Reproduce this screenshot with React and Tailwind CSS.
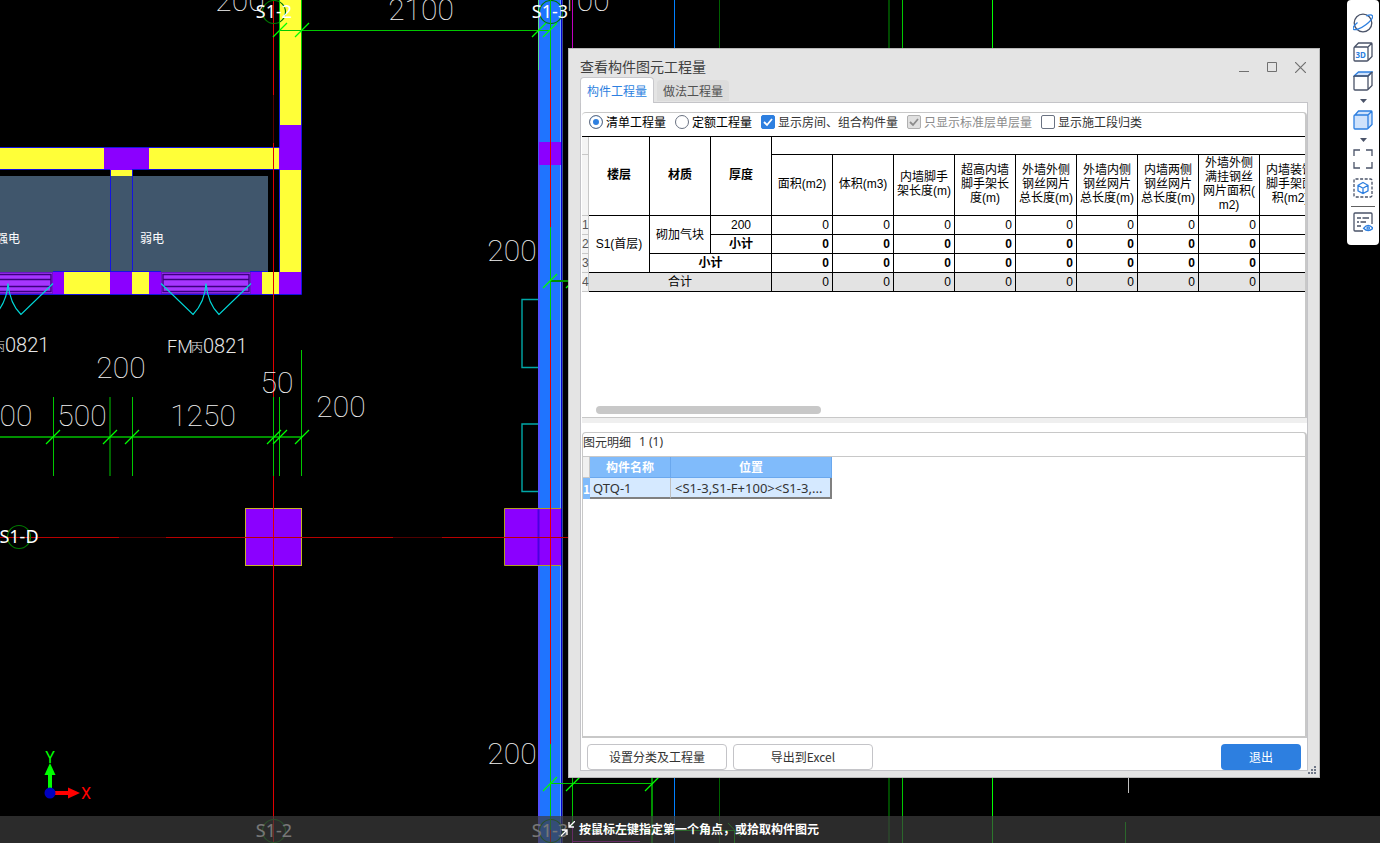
import React, { useState } from 'react'

// Quantity columns of the main table, one array entry per text line
const quantityColumns = [
  ['面积(m2)'],
  ['体积(m3)'],
  ['内墙脚手', '架长度(m)'],
  ['超高内墙', '脚手架长', '度(m)'],
  ['外墙外侧', '钢丝网片', '总长度(m)'],
  ['外墙内侧', '钢丝网片', '总长度(m)'],
  ['内墙两侧', '钢丝网片', '总长度(m)'],
  ['外墙外侧', '满挂钢丝', '网片面积(', 'm2)'],
  ['内墙装饰', '脚手架面', '积(m2)'],
]

// Dimension ticks, drawn as a short slash through each point
const ticks = [
  [280, 30], [302, 30], [539, 30], [550, 30],
  [53, 437], [110, 437], [132, 437], [274, 437], [280, 437], [302, 437],
  [550, 281], [573, 281], [550, 784], [573, 784], [652, 784],
]

const dimensions = [
  { x: 240, y: 11, text: '200' },
  { x: 421, y: 20, text: '2100' },
  { x: 585, y: 11, text: '100' },
  { x: 121, y: 378, text: '200' },
  { x: 16, y: 426, text: '00' },
  { x: 82, y: 426, text: '500' },
  { x: 203, y: 426, text: '1250' },
  { x: 277, y: 393, text: '50' },
  { x: 341, y: 417, text: '200' },
  { x: 512, y: 261, text: '200' },
  { x: 512, y: 764, text: '200' },
]

const Window = ({ x }) => (
  <g>
    <rect x={x} y="272" width="90" height="22" fill="#6a17c4" />
    <rect x={x + 1} y="273" width="88" height="20" fill="#a636ff" />
    <path d={`M${x + 2} 274.5h86v17h-86z`} fill="none" stroke="#3c0080" strokeWidth="1.4" />
    <path d={`M${x + 2} 279.5h86M${x + 2} 286.5h86`} stroke="#3c0080" strokeWidth="1.4" />
    <path
      d={`M${x} 283.5L${x + 32} 314.5Q${x + 44} 302 ${x + 45} 283.5Q${x + 47} 304 ${x + 58} 314.5L${x + 90} 283.5`}
      fill="none"
      stroke="#00d8d8"
      strokeWidth="1.2"
    />
  </g>
)

const Drawing = () => (
  <svg width="1380" height="843" viewBox="0 0 1380 843" className="absolute top-0 left-0 font-['Roboto','Noto_Sans_CJK_SC',sans-serif]">
    {/* Rooms */}
    <rect x="0" y="176" width="268" height="96" fill="#40566c" />

    {/* Walls */}
    <g fill="#ffff38">
      <rect x="279" y="0" width="23" height="272" />
      <rect x="0" y="148" width="280" height="22" />
      <rect x="110" y="170" width="22" height="6" />
      <rect x="64" y="272" width="216" height="22" />
    </g>

    {/* Columns */}
    <g fill="#8b00ff">
      <rect x="104" y="148" width="45" height="22" />
      <rect x="279" y="125" width="23" height="45" />
      <rect x="53" y="272" width="11" height="22" />
      <rect x="110" y="272" width="22" height="22" />
      <rect x="149" y="272" width="13" height="22" />
      <rect x="250" y="272" width="12" height="22" />
      <rect x="279" y="272" width="23" height="22" />
    </g>
    <g fill="none" stroke="#1414e0" strokeWidth="1">
      <path d="M0 147.5H279.5V70M301.5 70V294.5H0M0 169.5H110M132 169.5H279.5V272M110.5 170V272M132.5 170V272M53 271.5H161M250 271.5H268" />
    </g>
    <Window x={161} />
    <Window x={-37} />

    {/* Selected wall */}
    <rect x="538" y="0" width="23" height="843" fill="#1f74ff" />
    <path d="M539 0V843" stroke="#5050ff" strokeWidth="2" />
    <path d="M560.5 0V843" stroke="#6aa4ff" />
    <path d="M561.5 0V843" stroke="#0000d0" />
    <path d="M562.5 0V843" stroke="#3c4a90" />
    <rect x="539" y="142" width="22" height="23" fill="#8b00ff" />
    <path d="M561 508.5H504.5V565.5H561" fill="#8b00ff" stroke="#b0a020" />
    <path d="M538.5 509V565" stroke="#4a00e0" strokeWidth="2" />
    <rect x="245.5" y="508.5" width="56" height="57" fill="#8b00ff" stroke="#c8b428" />
    <path d="M538 299.5H522V367.500H538M538 424H522V491.500H538" fill="none" stroke="#00a8a8" strokeWidth="1.4" />

    {/* Axes */}
    <g stroke="#e00000">
      <path d="M273.5 0V95M273.5 118v2M273.5 143V843M550.5 70V843" />
      <path d="M273.5 95V143" stroke="#600000" />
      <path d="M0 537.5H119M142 537.5h2M166 537.5H393M416 537.5h2M442 537.5H568" stroke="#b80000" />
      <path d="M119 537.5H166M393 537.5H442" stroke="#500000" />
    </g>
    <g fill="none" stroke="#007a00" strokeWidth="1.2">
      <circle cx="274" cy="12" r="11.5" />
      <circle cx="551" cy="12" r="11.5" />
      <circle cx="19" cy="537" r="11.5" />
      <circle cx="274" cy="831" r="11.5" />
      <circle cx="551" cy="831" r="11.5" />
    </g>

    {/* Dimension lines */}
    <g fill="none" stroke="#00c800">
      <path d="M280 30.5H550M279.5 0V70M301.5 0V70M550.5 0V70M550.5 227V320M550.5 744V830" />
      <path d="M538.5 0V70" stroke="#50e090" />
      <path d="M0 437H302M550 281H568" stroke="#009000" strokeWidth="2" />
      <path d="M53.5 397V476M110 397V476M132.5 397V476M273.5 397V476M279.5 397V476M301.5 350V476" />
      <path d="M550 783.5H652M572.5 778V826M580 830.5H735" />
      <path d="M728 823L741 837M734.5 830V843" />
      <path d="M652 778V843" stroke="#009000" strokeWidth="2" />
      <path d="M719.5 0V843" stroke="#006000" />
      <path d="M889 0V843" stroke="#004800" strokeWidth="2" />
      <path d="M902.5 0V843" />
      <path d="M992.5 0V843" stroke="#00ff00" />
      <path d="M1125.5 822V843" />
    </g>
    <path d="M572.5 0V48M572.5 826V843M640 841.5H572" stroke="#c000c0" />
    <path d="M674.5 0V843" stroke="#0080ff" />
    <path d="M1128.5 778V793" stroke="#c0c0c0" />
    {ticks.map(([x, y]) => (
      <path key={`${x}-${y}`} d={`M${x - 7} ${y + 7}L${x + 7} ${y - 7}`} stroke="#00ff00" strokeWidth="1.2" />
    ))}

    {/* Labels */}
    <g fill="#f2f2f2" textAnchor="middle" className="text-[30px] font-thin">
      {dimensions.map(({ x, y, text }) => (
        <text key={`${x}-${y}`} x={x} y={y}>{text}</text>
      ))}
    </g>
    <g fill="#ffffff" textAnchor="middle" className="font-['Noto_Sans',sans-serif] text-[18px]">
      <text x="274" y="18">S1-2</text>
      <text x="550" y="18">S1-3</text>
      <text x="19" y="543">S1-D</text>
      <text x="274" y="837">S1-2</text>
      <text x="550" y="837">S1-3</text>
    </g>
    <g fill="#e6e6e6" className="text-[20px] font-light">
      <text x="167" y="353" className="text-[18px]">FM</text>
      <text x="191" y="352" className="text-[12px]">丙</text>
      <text x="203" y="353">0821</text>
      <text x="-7" y="351" className="text-[12px]">丙</text>
      <text x="5" y="352">0821</text>
    </g>
    <g fill="#ffffff" className="text-[12px]">
      <text x="-4" y="243">强电</text>
      <text x="140" y="243">弱电</text>
    </g>

    {/* Coordinate marker */}
    <g>
      <path d="M50 790V772" stroke="#00ff00" strokeWidth="4" />
      <path d="M44.5 775L50 763L55.500 775z" fill="#00ff00" />
      <path d="M53 793H70" stroke="#ff0000" strokeWidth="4" />
      <path d="M68 787.500L80 793L68 798.500z" fill="#ff0000" />
      <circle cx="50" cy="793" r="5.500" fill="#0000c0" />
      <text x="50" y="763" textAnchor="middle" fill="#00ff00" className="text-[16px]">Y</text>
      <text x="86" y="799" textAnchor="middle" fill="#ff0000" className="text-[16px]">X</text>
    </g>
  </svg>
)

const Check = () => (
  <svg viewBox="0 0 14 14" className="pointer-events-none col-start-1 row-start-1 h-[14px] w-[14px]">
    <path d="M3 7L6 10L11 4" fill="none" stroke="currentColor" strokeWidth="1.8" />
  </svg>
)

const Radio = ({ label, checked, onChange }) => (
  <label className="flex items-center gap-[3px] text-black">
    <input
      type="radio"
      name="quantity"
      checked={checked}
      onChange={onChange}
      className="h-[14px] w-[14px] appearance-none rounded-full border border-gray-500 bg-white checked:bg-[#2d7fe0] checked:shadow-[inset_0_0_0_3px_white]"
    />
    {label}
  </label>
)

const Checkbox = ({ label, defaultChecked, disabled }) => (
  <label className={disabled ? 'flex items-center gap-[3px] text-[#8c8c8c]' : 'flex items-center gap-[3px]'}>
    <span className={disabled ? 'grid text-[#8c8c8c]' : 'grid text-white'}>
      <input
        type="checkbox"
        defaultChecked={defaultChecked}
        disabled={disabled}
        className="col-start-1 row-start-1 h-[14px] w-[14px] appearance-none rounded-xs border border-gray-500 bg-white checked:border-[#2d7fe0] checked:bg-[#2d7fe0] disabled:border-[#b0b0b0] disabled:bg-[#e0e0e0]"
      />
      <Check />
    </span>
    {label}
  </label>
)

const cell = 'border-r border-b border-black'
const rowNumber = 'border-r border-b border-[#c8c8c8] bg-[#f4f4f4] font-normal text-[#555]'

const Zeros = ({ className }) =>
  quantityColumns.map((_, index) => (
    <td key={index} className={`border-r border-b border-black pr-[3px] pb-px text-right ${className}`}>
      {index < quantityColumns.length - 1 ? '0' : ''}
    </td>
  ))

const QuantityTable = () => (
  <table className="w-[739px] table-fixed border-separate border-spacing-0 border-t border-black text-center font-['Liberation_Sans','Noto_Sans_CJK_SC',sans-serif] text-xs leading-[14px] text-black">
    <colgroup>
      <col className="w-[7px]" />
      <col span={12} className="w-[61px]" />
    </colgroup>
    <thead>
      <tr className="h-[18px]">
        <th className={rowNumber}></th>
        <th rowSpan={2} className="border-r border-b border-black pb-[2px]">楼层</th>
        <th rowSpan={2} className="border-r border-b border-black pb-[2px]">材质</th>
        <th rowSpan={2} className="border-r border-b border-black pb-[2px]">厚度</th>
        <th colSpan={9} className={cell}></th>
      </tr>
      <tr className="h-[61px]">
        <th className={rowNumber}></th>
        {quantityColumns.map((lines, index) => (
          <th key={index} className="border-r border-b border-black pb-[2px] font-normal whitespace-nowrap">
            {lines.map((line) => (
              <div key={line}>{line}</div>
            ))}
          </th>
        ))}
      </tr>
    </thead>
    <tbody>
      <tr className="h-[19px]">
        <th className={rowNumber}>1</th>
        <td rowSpan={3} className={cell}>S1(首层)</td>
        <td rowSpan={2} className={cell}>砌加气块</td>
        <td className={cell}>200</td>
        <Zeros className="font-normal" />
      </tr>
      <tr className="h-[19px] font-bold">
        <th className={rowNumber}>2</th>
        <td className={cell}>小计</td>
        <Zeros className="font-bold" />
      </tr>
      <tr className="h-[19px] font-bold">
        <th className={rowNumber}>3</th>
        <td colSpan={2} className={cell}>小计</td>
        <Zeros className="font-bold" />
      </tr>
      <tr className="h-[19px] bg-[#e3e3e3]">
        <th className={rowNumber}>4</th>
        <td colSpan={3} className={cell}>合计</td>
        <Zeros className="font-normal" />
      </tr>
    </tbody>
  </table>
)

const DetailTable = () => (
  <table className="w-[249px] table-fixed border-separate border-spacing-0 text-left text-xs leading-4 text-[#333]">
    <colgroup>
      <col className="w-[7px]" />
      <col className="w-[81px]" />
      <col className="w-[161px]" />
    </colgroup>
    <thead>
      <tr className="h-[21px] text-center text-white">
        <th className="border-r border-b border-[#c8c8c8] bg-[#f0f0f0]"></th>
        <th className="border-r border-b border-[#6aa8ee] bg-[#80bbfb]">构件名称</th>
        <th className="border-r border-b border-[#6aa8ee] bg-[#80bbfb]">位置</th>
      </tr>
    </thead>
    <tbody>
      <tr className="h-[21px] bg-[#d5e9ff]">
        <th className="bg-[#80bbfb] text-center text-white">1</th>
        <td className="border-r border-b-2 border-r-[#c0c0c0] border-b-[#808080] pl-[3px] font-['Noto_Sans',sans-serif] text-[13px]">QTQ-1</td>
        <td className="border-r-2 border-b-2 border-[#808080] pl-1 font-['Noto_Sans',sans-serif] text-[13px] whitespace-nowrap">
          {'<S1-3,S1-F+100><S1-3,...'}
        </td>
      </tr>
    </tbody>
  </table>
)

const QuantityDialog = () => {
  const [mode, setMode] = useState('list')

  return (
    <section
      role="dialog"
      aria-label="查看构件图元工程量"
      className="absolute top-12 right-[60px] bottom-[65px] left-[568px] flex flex-col border border-[#b8b8b8] bg-[#e4e4e4] px-[11px] pb-[6px]"
    >
      {/* Title bar */}
      <header className="flex h-7 shrink-0 items-center justify-between pt-2 pr-[2px]">
        <h1 className="pb-[2px] text-sm text-[#404040]">查看构件图元工程量</h1>
        <div className="flex gap-[17px] text-[#707070]">
          <button type="button" aria-label="最小化">
            <svg width="11" height="11" viewBox="0 0 11 11"><path d="M0 9.5H10" stroke="currentColor" /></svg>
          </button>
          <button type="button" aria-label="最大化">
            <svg width="11" height="11" viewBox="0 0 11 11"><path d="M.5.5H9.500V9.500H.5z" fill="none" stroke="currentColor" /></svg>
          </button>
          <button type="button" aria-label="关闭">
            <svg width="11" height="11" viewBox="0 0 11 11"><path d="M0 0L11 11M11 0L0 11" stroke="currentColor" strokeWidth="1.200" /></svg>
          </button>
        </div>
      </header>

      {/* Tabs */}
      <nav className="-mb-px flex h-[26px] shrink-0 items-end gap-[3px] text-xs">
        <button type="button" className="z-10 h-[26px] w-[74px] rounded-t-sm border border-b-0 border-[#c8c8cc] bg-white text-[#2d7fe0]">
          构件工程量
        </button>
        <button type="button" className="mb-[2px] h-[21px] w-[72px] rounded-t-sm bg-[#dcdcdc] text-[#505050]">
          做法工程量
        </button>
      </nav>

      <div className="flex min-h-0 flex-1 flex-col border border-[#c4c4c8] bg-white pt-[9px] pl-px">
        <div className="flex h-[306px] shrink-0 flex-col rounded-t-sm border-t border-r-2 border-b border-[#c8c8c8]">
          <div className="flex h-[23px] shrink-0 items-center gap-[9px] pb-[6px] pl-[7px] text-xs whitespace-nowrap">
            <Radio label="清单工程量" checked={mode === 'list'} onChange={() => setMode('list')} />
            <Radio label="定额工程量" checked={mode === 'quota'} onChange={() => setMode('quota')} />
            <Checkbox label="显示房间、组合构件量" defaultChecked />
            <Checkbox label="只显示标准层单层量" defaultChecked disabled />
            <Checkbox label="显示施工段归类" />
          </div>
          <div className="min-h-0 flex-1 overflow-hidden">
            <QuantityTable />
          </div>
          <div className="mb-[3px] ml-[14px] h-2 w-[225px] rounded-full bg-[#c8c8c8]" />
        </div>

        <div className="mb-[9px] h-[5px] shrink-0 bg-[#efefef]" />

        <div className="flex min-h-0 flex-1 flex-col rounded-t-sm border-t border-r-2 border-b-2 border-l border-[#c8c8c8]">
          <h2 className="flex h-[24px] shrink-0 items-center gap-2 border-b border-[#c8c8c8] pb-[6px] text-xs">
            图元明细 <span className="font-['Noto_Sans',sans-serif]">1 (1)</span>
          </h2>
          <DetailTable />
        </div>

        {/* Footer buttons */}
        <footer className="flex h-[32px] shrink-0 items-end gap-[6px] pr-[6px] pl-[5px] text-xs">
          <button type="button" className="h-[26px] w-[140px] rounded-sm border border-[#c4c4c8] bg-white">设置分类及工程量</button>
          <button type="button" className="h-[26px] w-[140px] rounded-sm border border-[#c4c4c8] bg-white">导出到Excel</button>
          <button type="button" className="ml-auto h-[26px] w-20 rounded-sm bg-[#2d7fe0] text-white">退出</button>
        </footer>
      </div>

      {/* Resize grip */}
      <svg width="8" height="8" viewBox="0 0 8 8" className="absolute right-[3px] bottom-[3px] fill-[#707888]">
        <path d="M6 0h2v2h-2zM3 3h2v2h-2zM6 3h2v2h-2zM0 6h2v2h-2zM3 6h2v2h-2zM6 6h2v2h-2z" />
      </svg>
    </section>
  )
}

const Tool = ({ label, children }) => (
  <button type="button" aria-label={label} className="flex h-[22px] w-[22px] items-center justify-center text-[#4a5368]">
    <svg width="20" height="20" viewBox="0 0 20 20" fill="none" stroke="currentColor" strokeWidth="1.300">
      {children}
    </svg>
  </button>
)

const Caret = () => (
  <svg width="7" height="3" viewBox="0 0 7 3" className="overflow-visible">
    <path d="M0 0H7L3.500 4z" fill="#4a5368" />
  </svg>
)

const ViewToolbar = () => (
  <aside className="absolute top-0 right-px flex w-8 flex-col items-center gap-[7px] rounded-sm bg-white pt-3 pb-3">
    <Tool label="动态观察">
      <circle cx="10" cy="10" r="8.800" />
      <path d="M4.500 9.500C1 12.500-.8 15 .4 16.200c1.600 1.600 8-1 12.400-4.400S20.500 4.500 19.300 2.600c-.8-1.200-3.500-.8-6 .2" stroke="#2d7fe0" />
    </Tool>
    <Tool label="三维">
      <path d="M1 6Q1 5 2 5H14Q15 5 15 6V18Q15 19 14 19H2Q1 19 1 18zM1.500 5L5.500 1H18.500Q19 1 19 2V14.500L15 18.500M15 5L19 1" />
      <text x="2.500" y="16" fontSize="8" fontWeight="700" fill="#2d7fe0" stroke="none" className="font-['Noto_Sans',sans-serif]">3D</text>
    </Tool>
    <Tool label="俯视">
      <path d="M1 5L5.500 1H19L15 5z" fill="#cfe2fb" stroke="#2d7fe0" />
      <path d="M1 5V18Q1 19 2 19H14Q15 19 15 18V5M19 1V14.500L15 18.500" />
      <path d="M1 5H15L19 1" stroke="#4a5368" />
    </Tool>
    <Caret />
    <Tool label="着色">
      <path d="M1 6Q1 5 2 5L5.500 1H18.500Q19 1 19 2V14.500L15 18.500Q14.500 19 14 19H2Q1 19 1 18zM1.500 5H15V18.500M15 5L19 1" fill="#cfe2fb" stroke="#2d7fe0" />
    </Tool>
    <Caret />
    <Tool label="全屏">
      <path d="M1 7V1H7M13 1H19V7M19 13V19H13M7 19H1V13" />
    </Tool>
    <Tool label="局部三维">
      <rect x="1" y="1" width="18" height="18" rx="1.500" strokeDasharray="3 1.600" />
      <path d="M10 4.500L15 7.300V12.800L10 15.600L5 12.800V7.300zM5 7.300L10 10.200L15 7.300M10 10.200V15.600" stroke="#2d7fe0" />
    </Tool>
    <div className="border-t border-[#606060] px-px pt-1">
      <Tool label="显示设置">
        <path d="M10 19H2Q1 19 1 18V2Q1 1 2 1H18Q19 1 19 2V12M4 6h4M9.500 6H16M4 10h2M7.500 10H13M4 14h4" />
        <path d="M10.500 16.300Q15.200 10.600 20 16.300Q15.200 21 10.500 16.300z" stroke="#2d7fe0" fill="white" />
        <circle cx="15.200" cy="16" r="1.200" stroke="#2d7fe0" />
      </Tool>
    </div>
  </aside>
)

const StatusBar = () => (
  <footer className="absolute inset-x-0 bottom-0 flex h-[27px] items-center justify-center gap-1 bg-[#3d3d3d]/70 pb-[2px] text-xs font-bold text-white">
    <svg width="14" height="16" viewBox="0 0 14 16" fill="none" stroke="white" strokeWidth="1.300">
      <path d="M14 0L8.500 5.500M8 1V6H13M0 15L6 9M1 9H6V14" />
    </svg>
    按鼠标左键指定第一个角点，或拾取构件图元
  </footer>
)

export default function App() {
  return (
    <main className="relative h-screen w-full overflow-hidden bg-black font-['Noto_Sans_CJK_SC',sans-serif] text-[#333]">
      <Drawing />
      <QuantityDialog />
      <ViewToolbar />
      <StatusBar />
    </main>
  )
}
